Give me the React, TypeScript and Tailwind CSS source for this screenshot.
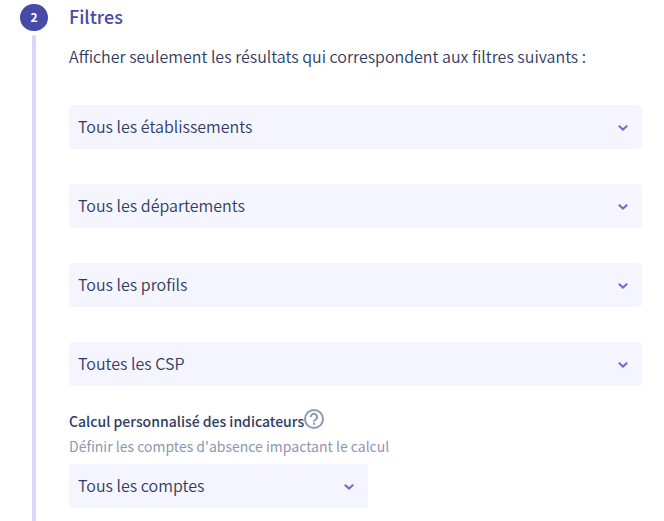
import { useState } from "react";
import clsx from "clsx";

interface FilterSelectProps {
  id: string;
  label?: string;
  describedBy?: string;
  options: string[];
  className?: string;
}

function FilterSelect({ id, label, describedBy, options, className }: FilterSelectProps) {
  const [value, setValue] = useState(options[0]);

  return (
    <div className={clsx("grid items-center", className)}>
      <select
        id={id}
        aria-label={label}
        aria-describedby={describedBy}
        value={value}
        onChange={(e) => setValue(e.target.value)}
        className="col-start-1 row-start-1 h-11 w-full appearance-none rounded bg-[#f5f5ff] pb-0.5 pl-[9px] pr-10 text-base font-[350] text-[#2f3c61] outline-none focus-visible:ring-2 focus-visible:ring-[#d6d9fc]"
      >
        {options.map((option) => (
          <option key={option}>{option}</option>
        ))}
      </select>
      <svg
        viewBox="0 0 10 6"
        className="pointer-events-none col-start-1 row-start-1 mr-[14px] mt-0.5 h-[6px] w-[10px] justify-self-end"
        fill="none"
        stroke="#7069d2"
        strokeWidth="2"
        aria-hidden="true"
      >
        <path d="M0.8 0.7 5 4.6 9.2 0.7" />
      </svg>
    </div>
  );
}

const filters = [
  { id: "etablissements", label: "Établissements", options: ["Tous les établissements"] },
  { id: "departements", label: "Départements", options: ["Tous les départements"] },
  { id: "profils", label: "Profils", options: ["Tous les profils"] },
  { id: "csp", label: "CSP", options: ["Toutes les CSP"] },
];

export default function App() {
  return (
    <main className="flex min-h-screen gap-[21px] bg-white pl-5 pr-[22px] pt-1 font-['Noto_Sans_CJK_JP',sans-serif] text-[#2f3c61]">
      {/* Step marker */}
      <div className="flex w-7 shrink-0 flex-col items-center gap-1">
        <span className="flex h-[27px] w-7 shrink-0 items-center justify-center rounded-full bg-[#484aa8] pb-0.5 text-xs font-bold text-white">
          2
        </span>
        <div className="w-1 grow rounded-t-full bg-[#d6d9fc]" />
      </div>

      <section className="min-w-0 grow pb-3">
        <h2 className="text-lg leading-6 font-medium text-[#484aa8]">Filtres</h2>
        <p className="mt-4 text-base leading-6 font-[350]">
          Afficher seulement les résultats qui correspondent aux filtres suivants :
        </p>

        <div className="mt-[37px] flex flex-col gap-[35px]">
          {filters.map((filter) => (
            <FilterSelect key={filter.id} {...filter} />
          ))}
        </div>

        <div className="mt-[22px] flex h-[26px] items-center">
          <label htmlFor="comptes" className="text-sm leading-6 font-medium">
            Calcul personnalisé des indicateurs
          </label>
          <button type="button" aria-label="Aide" className="mb-1 text-[#8c97b2]">
            <svg viewBox="1 1 20 20" className="h-5 w-5" fill="none" stroke="currentColor" strokeWidth="2">
              <circle cx="11" cy="11" r="9" />
              <path d="M7.9 8.9a3.1 3.1 0 1 1 5 2.4c-1.1.8-1.9 1.4-1.9 2.5" />
              <path d="M11 14.8v2" />
            </svg>
          </button>
        </div>
        <p id="comptes-aide" className="text-sm leading-6 text-[#8c97b2]">
          Définir les comptes d'absence impactant le calcul
        </p>
        <FilterSelect
          id="comptes"
          describedBy="comptes-aide"
          options={["Tous les comptes"]}
          className="mt-1.5 max-w-[299px]"
        />
      </section>
    </main>
  );
}
